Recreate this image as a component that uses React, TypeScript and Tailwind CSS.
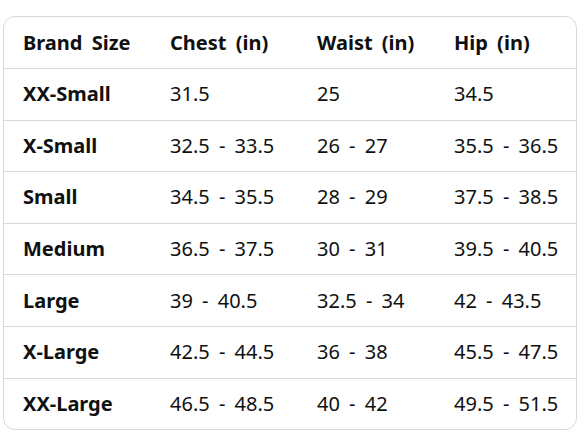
import React from 'react';

const rows = [
  ['XX-Small', '31.5', '25', '34.5'],
  ['X-Small', '32.5 - 33.5', '26 - 27', '35.5 - 36.5'],
  ['Small', '34.5 - 35.5', '28 - 29', '37.5 - 38.5'],
  ['Medium', '36.5 - 37.5', '30 - 31', '39.5 - 40.5'],
  ['Large', '39 - 40.5', '32.5 - 34', '42 - 43.5'],
  ['X-Large', '42.5 - 44.5', '36 - 38', '45.5 - 47.5'],
  ['XX-Large', '46.5 - 48.5', '40 - 42', '49.5 - 51.5'],
];

const cols = 'grid grid-cols-[147px_147px_137px_1fr] items-center';

export default function App() {
  return (
    <div className="min-h-[441px] w-[588px] bg-white pt-4 pl-[3px] font-['Noto_Sans',sans-serif] text-[20px] text-[#0f1111] [word-spacing:4px]">
      <div className="w-[574px] overflow-hidden rounded-xl border border-[#d5d9d9]">
        <div className={`${cols} h-[51px] font-bold`}>
          <div className="pl-[19px]">Brand Size</div>
          <div className="pl-[19px]">Chest (in)</div>
          <div className="pl-[19px]">Waist (in)</div>
          <div className="pl-[19px]">Hip (in)</div>
        </div>
        {rows.map((r) => (
          <div key={r[0]} className={`${cols} h-[51.6px] border-t border-[#d5d9d9]`}>
            <div className="pl-[19px] font-bold">{r[0]}</div>
            <div className="pl-[19px]">{r[1]}</div>
            <div className="pl-[19px]">{r[2]}</div>
            <div className="pl-[19px]">{r[3]}</div>
          </div>
        ))}
      </div>
    </div>
  );
}
